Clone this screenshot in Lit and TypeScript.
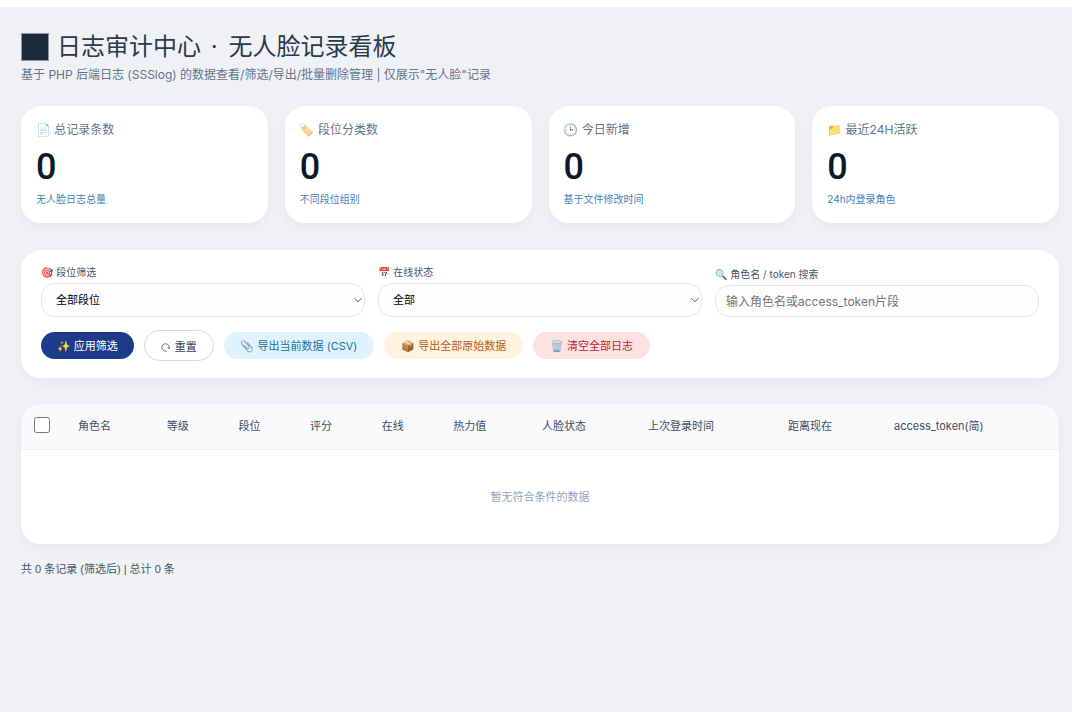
import { LitElement, html, css } from "lit";
import { customElement, state } from "lit/decorators.js";

interface Stat {
  icon: string;
  label: string;
  value: number;
  note: string;
}

const STATS: Stat[] = [
  { icon: "📄", label: "总记录条数", value: 0, note: "无人脸日志总量" },
  { icon: "🏷️", label: "段位分类数", value: 0, note: "不同段位组别" },
  { icon: "🕒", label: "今日新增", value: 0, note: "基于文件修改时间" },
  { icon: "📁", label: "最近24H活跃", value: 0, note: "24h内登录角色" },
];

const COLUMNS = [
  "角色名", "等级", "段位", "评分", "在线", "热力值",
  "人脸状态", "上次登录时间", "距离现在", "access_token(简)",
];

@customElement("app-root")
export class AppRoot extends LitElement {
  @state() private total = 0;

  static styles = css`
    :host {
      display: flex;
      flex-direction: column;
      box-sizing: border-box;
      min-height: 100vh;
      padding-top: 7px;
      background: #fff;
      font-family: Inter, "Noto Sans CJK SC", "Noto Color Emoji", sans-serif;
      color: #1e293b;
    }
    * { box-sizing: border-box; }
    main {
      flex: 1;
      background: #eff1f5;
      padding: 24px 13px 24px 21px;
    }
    h1 {
      margin: 0;
      display: flex;
      align-items: center;
      gap: 8px;
      font-size: 24px;
      line-height: 32px;
      font-weight: 400;
      color: #2b394c;
    }
    .dot { padding: 0 4px 0 3px; }
    .mark {
      width: 28px;
      height: 28px;
      background: #1e293b;
      border: 1px solid #8b95a3;
    }
    .subtitle {
      margin: 3px 0 0;
      font-size: 12px;
      line-height: 18px;
      color: #64748b;
    }
    .card {
      background: #fff;
      border-radius: 20px;
      box-shadow: 0 4px 12px rgba(15, 23, 42, 0.04);
    }
    .stats {
      display: grid;
      grid-template-columns: repeat(4, 1fr);
      gap: 17px;
      margin-top: 22px;
    }
    .stat { padding: 15px 15px 16px; }
    .stat-label { font-size: 12px; line-height: 18px; color: #64748b; }
    .stat-value {
      margin-top: 7px;
      font-family: Roboto, sans-serif;
      font-size: 36px;
      line-height: 42px;
      font-weight: 500;
      color: #0f172a;
    }
    .stat-note { margin-top: 3px; font-size: 10px; line-height: 16px; color: #3f83bd; }
    .filters { margin-top: 27px; padding: 14px 20px 17px; }
    .fields {
      display: grid;
      grid-template-columns: repeat(3, 1fr);
      gap: 13px;
      align-items: end;
    }
    .field { display: flex; flex-direction: column; gap: 3px; }
    .field label { font-size: 10px; line-height: 16px; color: #475569; }
    .control {
      width: 100%;
      height: 34px;
      border: 1px solid #e2e8f0;
      border-radius: 14px;
      background: #fdfdfe;
      font: inherit;
      font-size: 11px;
      color: #000;
    }
    .picker { position: relative; display: block; }
    select.control { appearance: none; padding: 0 24px 0 14px; }
    input.control { height: 32px; padding: 0 10px; font-size: 12px; }
    .control::placeholder { color: #757575; }
    .chevron {
      position: absolute;
      right: 2px;
      top: 12px;
      width: 10px;
      height: 10px;
      fill: none;
      stroke: #555;
      pointer-events: none;
    }
    .actions { display: flex; flex-wrap: wrap; align-items: center; gap: 10px; margin-top: 13px; }
    .btn {
      height: 27px;
      padding: 0 17px 1px;
      border: 0;
      border-radius: 20px;
      font: inherit;
      font-size: 11px;
      white-space: nowrap;
    }
    .plain {
      display: flex;
      align-items: center;
      gap: 5px;
      height: 31px;
      padding: 0 16px;
      background: #fff;
      border: 1px solid #d3dae3;
      color: #334155;
    }
    .reset { width: 9px; height: 9px; margin-top: 3px; fill: none; stroke: #475569; stroke-width: 0.8; }
    .primary { padding: 0 16px 1px; background: #1e3a8a; color: #fff; }
    .info { background: #e0f2fe; color: #1b7299; }
    .warn { background: #fff3e0; color: #b45f1a; }
    .danger { background: #fee2e2; color: #b52a35; }
    .table-card { margin-top: 26px; overflow: hidden; }
    table { width: 100%; border-collapse: collapse; font-size: 11px; }
    th {
      height: 45px;
      padding: 0 12px 2px;
      background: #f9fafc;
      border-bottom: 1px solid #edf1f5;
      text-align: left;
      font-weight: 400;
      white-space: nowrap;
      color: #3f4d61;
    }
    .pick { width: 45px; padding: 0 12px 3px 13px; }
    .pick input { display: block; width: 16px; height: 16px; margin: 0; }
    .empty { height: 95px; padding: 0 0 2px; text-align: center; color: #94a3b8; }
    .summary {
      margin: 16px 0 0;
      font-family: "Liberation Sans", "Noto Sans CJK SC", sans-serif;
      font-size: 11px;
      line-height: 18px;
      color: #475569;
    }
  `;

  private chevron() {
    return html`<svg class="chevron" viewBox="0 0 10 10"><path d="M1.5 3.2 5 6.8 8.5 3.2" /></svg>`;
  }

  render() {
    return html`
      <main>
        <header>
          <h1><span class="mark"></span><span>日志审计中心<span class="dot"> · </span>无人脸记录看板</span></h1>
          <p class="subtitle">基于 PHP 后端日志 (SSSlog) 的数据查看/筛选/导出/批量删除管理 | 仅展示"无人脸"记录</p>
        </header>
        <section class="stats">
          ${STATS.map((s) => html`
            <div class="card stat">
              <div class="stat-label">${s.icon} ${s.label}</div>
              <div class="stat-value">${s.value}</div>
              <div class="stat-note">${s.note}</div>
            </div>`)}
        </section>
        <section class="card filters">
          <div class="fields">
            <div class="field">
              <label for="rank">🎯 段位筛选</label>
              <span class="picker">
                <select id="rank" class="control"><option>全部段位</option></select>
                ${this.chevron()}
              </span>
            </div>
            <div class="field">
              <label for="online">📅 在线状态</label>
              <span class="picker">
                <select id="online" class="control"><option>全部</option></select>
                ${this.chevron()}
              </span>
            </div>
            <div class="field">
              <label for="search">🔍 角色名 / token 搜索</label>
              <input id="search" class="control" type="text" placeholder="输入角色名或access_token片段" />
            </div>
          </div>
          <div class="actions">
            <button class="btn primary">✨ 应用筛选</button>
            <button class="btn plain">
              <svg class="reset" viewBox="0 0 9 9"><path d="M5.6 8A3.7 3.7 0 1 1 8.1 5.4M6.6 4.6 8.1 5.6 8.8 4" /></svg>重置
            </button>
            <button class="btn info">📎 导出当前数据 (CSV)</button>
            <button class="btn warn">📦 导出全部原始数据</button>
            <button class="btn danger">🗑️ 清空全部日志</button>
          </div>
        </section>
        <section class="card table-card">
          <table>
            <thead>
              <tr>
                <th class="pick"><input type="checkbox" aria-label="全选" /></th>
                ${COLUMNS.map((c) => html`<th>${c}</th>`)}
              </tr>
            </thead>
            <tbody>
              <tr><td class="empty" colspan="11">暂无符合条件的数据</td></tr>
            </tbody>
          </table>
        </section>
        <p class="summary">共 ${this.total} 条记录 (筛选后) | 总计 ${this.total} 条</p>
      </main>
    `;
  }
}
